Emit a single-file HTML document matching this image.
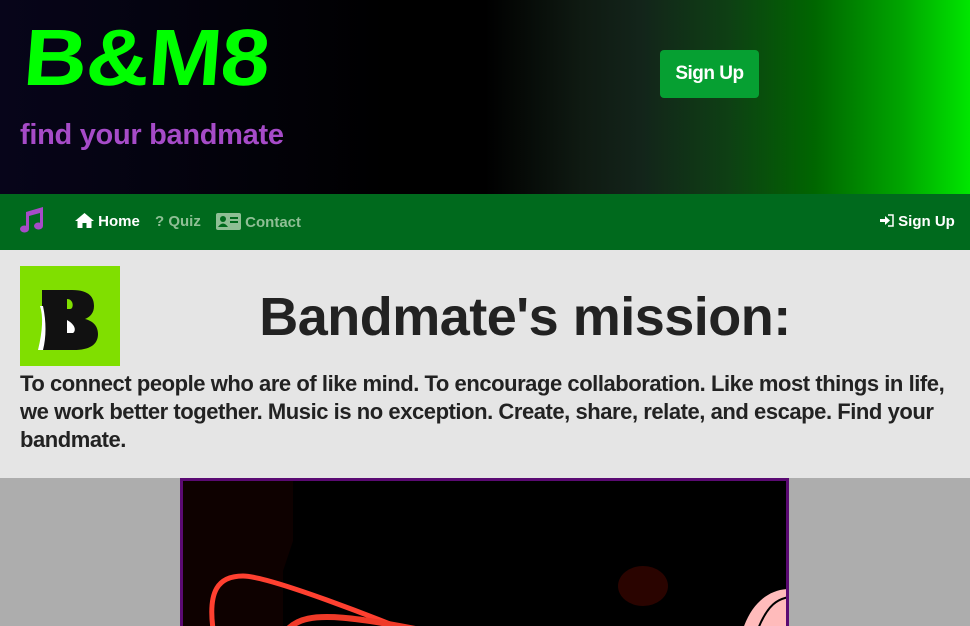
<!DOCTYPE html>
<html><head><meta charset="utf-8"><style>
*{margin:0;padding:0;box-sizing:border-box}
body{width:970px;height:626px;overflow:hidden;background:#adadad;font-family:"Liberation Sans",sans-serif}
.hdr{position:relative;height:194px;background:linear-gradient(90deg,#07051a 0%,#000 40%,#000 50%,#0f1a12 60%,#13241a 66%,#0e3f14 75%,#006600 84%,#00a500 93%,#00e600 100%)}
.logo{position:absolute;left:24px;top:12px;font-family:"Liberation Sans",sans-serif;font-weight:900;font-size:80px;color:#00ff00;letter-spacing:-1px;transform:scaleX(1.1) skewX(-4deg);transform-origin:left}
.tag{position:absolute;left:20px;top:119px;font-size:29px;font-weight:bold;color:#a64bc8;letter-spacing:-0.3px}
.btn{position:absolute;left:660px;top:50px;width:99px;height:48px;background:#06a032;border-radius:4px;color:#fff;font-weight:bold;font-size:19px;text-align:center;line-height:48px;letter-spacing:-0.5px}
.nav{position:relative;height:56px;background:#006a1d;color:#fff;font-weight:bold;font-size:15px}
.nav span{position:absolute;top:19px}
.main{background:#e5e5e5;height:228px;position:relative}
.bl{position:absolute;left:20px;top:16px;width:100px;height:100px;background:#80df00}
h1{position:absolute;left:0;width:1050px;text-align:center;top:36px;font-size:54px;color:#222;letter-spacing:-0.5px}
.p{position:absolute;left:20px;top:120px;width:960px;font-size:22px;font-weight:bold;color:#222;line-height:28px;letter-spacing:-0.45px;white-space:nowrap}
.img{position:absolute;left:180px;top:478px;width:609px;height:148px;border:3px solid #5a0a72;border-bottom:none;background:#000;overflow:hidden}
</style></head><body>
<div class="hdr"><div class="logo">B&amp;M8</div><div class="tag">find your bandmate</div><div class="btn">Sign Up</div></div>
<div class="nav">
<span style="left:18px;top:12px"><svg width="27" height="28" viewBox="0 0 27 28"><path d="M8 6L25 1v19a4.5 3.5 0 1 1-3-3.3V7L11 10v13a4.5 3.5 0 1 1-3-3.3z" fill="#a64bc8"/></svg></span>
<span style="left:75px"><svg width="19" height="15" viewBox="0 0 19 15" style="vertical-align:-2px"><path d="M9.5 0L0 8h2.5v7h5v-5h4v5h5V8H19z" fill="#fff"/></svg> Home</span>
<span style="left:155px;color:#8fbf95">? Quiz</span>
<span style="left:216px;color:#8fbf95"><svg width="25" height="17" viewBox="0 0 25 17" style="vertical-align:-3px"><rect width="25" height="17" rx="2" fill="#8fbf95"/><circle cx="7" cy="6" r="3" fill="#006a1d"/><path d="M2 14q5-7 10 0z" fill="#006a1d"/><rect x="14" y="4" width="8" height="2" fill="#006a1d"/><rect x="14" y="8" width="8" height="2" fill="#006a1d"/></svg> Contact</span>
<span style="left:880px"><svg width="14" height="13" viewBox="0 0 14 13" style="vertical-align:-1px"><path d="M0 5h5V2l5 4.5-5 4.5V8H0z" fill="#fff"/><path d="M8 1h5v11H8" stroke="#fff" stroke-width="1.5" fill="none"/></svg> Sign Up</span>
</div>
<div class="main"><div class="bl"><svg width="100" height="100" viewBox="0 0 100 100"><path d="M22 24h30c18 0 22 8 22 16 0 7-4 11-9 13 8 2 13 7 13 15 0 11-9 16-24 16H22z" fill="#111"/><path d="M47 54v13l6 0c3-2 3-8-6-13z" fill="#fff"/><path d="M47 33v10h3c4 0 4-10-3-10z" fill="#80df00"/><path d="M20 40q5 15-2 44l5 0q5-20 0-44z" fill="#fff"/></svg></div>
<h1>Bandmate's mission:</h1>
<div class="p">To connect people who are of like mind. To encourage collaboration. Like most things in life,<br>we work better together. Music is no exception. Create, share, relate, and escape. Find your<br>bandmate.</div></div>
<div class="img"><svg width="609" height="148" viewBox="0 0 609 148">
<path d="M0 0h110v60l-10 30v58H0z" fill="#0e0100"/>
<path d="M30 148C25 110 35 95 60 95s130 40 200 70" stroke="#ff4030" stroke-width="5" fill="none"/>
<path d="M105 148c20-20 60-15 200 15" stroke="#f03a28" stroke-width="6" fill="none"/>
<ellipse cx="460" cy="105" rx="25" ry="20" fill="#2a0400"/>
<path d="M560 148c10-30 30-40 46-40v40z" fill="#fbb"/>
<path d="M575 148c10-25 20-30 31-32" stroke="#000" stroke-width="2" fill="none"/>
</svg></div>
</body></html>
